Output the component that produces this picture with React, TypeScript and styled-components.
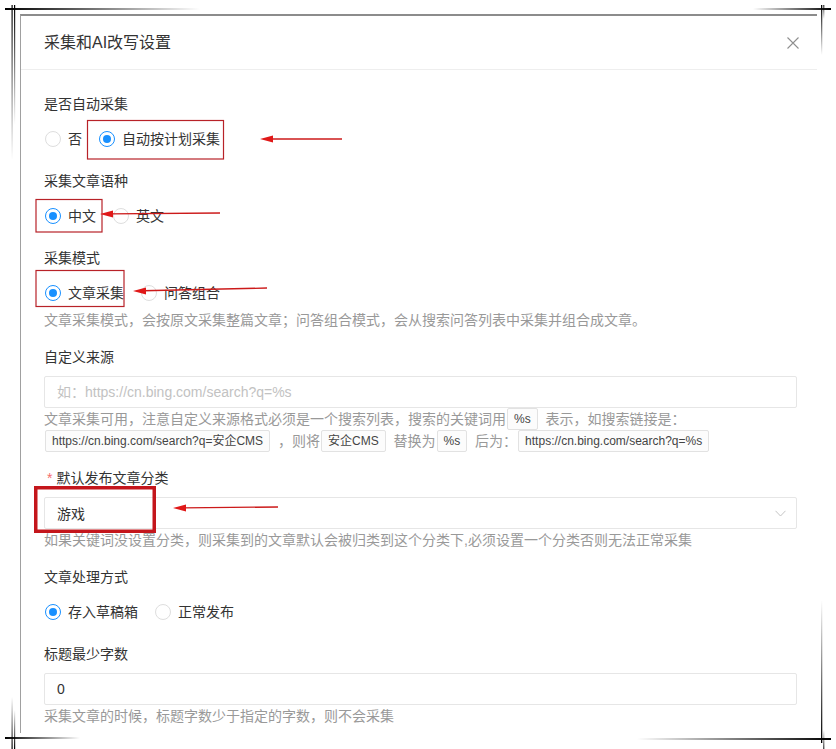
import React from 'react';
import styled, { createGlobalStyle } from 'styled-components';

const GlobalStyle = createGlobalStyle`
  html, body { margin: 0; padding: 0; background: #fff; }
  body { font-family: "Liberation Sans", "Noto Sans CJK SC", sans-serif; color: #333; }
  * { box-sizing: border-box; }
`;

const Page = styled.div`
  position: relative;
  width: 836px;
  height: 749px;
  overflow: hidden;
  background: #fff;
  padding: 14px 0 0 20px;
`;

const Modal = styled.div`
  width: 797px;
  height: 719px;
  border-top: 2px solid #8c8c8c;
  border-left: 1px solid #a0a0a0;
  display: flex;
  flex-direction: column;
  overflow: hidden;
`;

const Header = styled.div`
  height: 54px;
  flex: 0 0 54px;
  display: flex;
  align-items: center;
  justify-content: space-between;
  padding: 0 18px 0 23px;
  border-bottom: 1px solid #eeeeee;
`;

const Title = styled.div`
  font-size: 16px;
  line-height: 22px;
  color: #333;
`;

const Close = styled.button`
  border: 0;
  background: none;
  padding: 0;
  width: 12px;
  height: 12px;
  display: flex;
  cursor: pointer;
`;

const Body = styled.div`
  padding: 23px 20px 0 23px;
  display: flex;
  flex-direction: column;
`;

const FormItem = styled.div`
  display: flex;
  flex-direction: column;
  margin-bottom: 15px;
`;

const Label = styled.div`
  height: 22px;
  line-height: 22px;
  font-size: 14px;
  color: #333;
  margin-bottom: 8px;
  white-space: nowrap;
`;

const Req = styled.span`
  color: #f56c6c;
  margin: 0 4px 0 3px;
`;

const RadioGroup = styled.div`
  display: flex;
  align-items: center;
  height: 32px;
  padding-left: 1px;
`;

const Option = styled.label`
  display: inline-flex;
  align-items: center;
  gap: 7px;
  margin-right: 17px;
  font-size: 14px;
  line-height: 20px;
  color: #333;
  cursor: pointer;
  white-space: nowrap;
`;

const Dot = styled.span<{ $checked?: boolean }>`
  position: relative;
  width: 16px;
  height: 16px;
  border-radius: 50%;
  border: 1px solid ${(p) => (p.$checked ? '#1890ff' : '#dedede')};
  background: #fff;
  flex: 0 0 16px;
  &::after {
    content: '';
    display: ${(p) => (p.$checked ? 'block' : 'none')};
    position: absolute;
    top: 3px;
    left: 3px;
    width: 8px;
    height: 8px;
    border-radius: 50%;
    background: #1890ff;
  }
`;

const Help = styled.div`
  font-size: 14px;
  line-height: 22px;
  color: #999;
  white-space: nowrap;
`;

const Code = styled.code`
  display: inline-block;
  height: 22px;
  line-height: 20px;
  vertical-align: top;
  padding: 0 6px;
  margin: 0 4px 0 1px;
  border: 1px solid #e2e2e2;
  border-radius: 2px;
  background: #fcfcfc;
  font-family: "Liberation Sans", "Noto Sans CJK SC", sans-serif;
  font-size: 12px;
  color: #444;
`;

const Input = styled.input`
  width: 100%;
  height: 32px;
  border: 1px solid #e6e6e6;
  border-radius: 2px;
  padding: 0 12px;
  font-family: inherit;
  font-size: 14px;
  color: #333;
  outline: none;
  background: #fff;
  &::placeholder { color: #c2c2c2; }
`;

const Select = styled.div`
  width: 100%;
  height: 32px;
  border: 1px solid #e6e6e6;
  border-radius: 2px;
  padding: 0 10px 0 12px;
  display: flex;
  align-items: center;
  justify-content: space-between;
  font-size: 14px;
  color: #333;
`;

const Overlay = styled.svg`
  position: absolute;
  left: 0;
  top: 0;
  width: 836px;
  height: 749px;
  pointer-events: none;
`;

type RadioOpt = { text: string; checked?: boolean };

const Radios = ({ options }: { options: RadioOpt[] }) => (
  <RadioGroup>
    {options.map((o) => (
      <Option key={o.text}>
        <Dot $checked={o.checked} />
        {o.text}
      </Option>
    ))}
  </RadioGroup>
);

const Arrow = ({ tx, ty, ex, ey }: { tx: number; ty: number; ex: number; ey: number }) => (
  <g>
    <line x1={tx + 10} y1={ty + (ey - ty) * 0.08} x2={ex} y2={ey} stroke="#cc1a1a" strokeWidth={1.3} />
    <polygon points={`${tx},${ty} ${tx + 13},${ty - 3.5} ${tx + 13},${ty + 3.5}`} fill="#e01818" />
  </g>
);

export default function App() {
  return (
    <>
      <GlobalStyle />
      <Page>
        <Modal>
          <Header>
            <Title>采集和AI改写设置</Title>
            <Close aria-label="关闭">
              <svg width="12" height="12" viewBox="0 0 12 12">
                <path d="M0.5 0.5L11.5 11.5M11.5 0.5L0.5 11.5" stroke="#8f8f8f" strokeWidth="1.1" fill="none" />
              </svg>
            </Close>
          </Header>
          <Body>
            <FormItem>
              <Label>是否自动采集</Label>
              <Radios options={[{ text: '否' }, { text: '自动按计划采集', checked: true }]} />
            </FormItem>
            <FormItem>
              <Label>采集文章语种</Label>
              <Radios options={[{ text: '中文', checked: true }, { text: '英文' }]} />
            </FormItem>
            <FormItem>
              <Label>采集模式</Label>
              <Radios options={[{ text: '文章采集', checked: true }, { text: '问答组合' }]} />
              <Help>文章采集模式，会按原文采集整篇文章；问答组合模式，会从搜索问答列表中采集并组合成文章。</Help>
            </FormItem>
            <FormItem>
              <Label>自定义来源</Label>
              <Input placeholder="如：https://cn.bing.com/search?q=%s" />
              <Help>
                文章采集可用，注意自定义来源格式必须是一个搜索列表，搜索的关键词用<Code>%s</Code> 表示，如搜索链接是：
              </Help>
              <Help>
                <Code>https://cn.bing.com/search?q=安企CMS</Code> ，则将<Code>安企CMS</Code> 替换为<Code>%s</Code> 后为：<Code>https://cn.bing.com/search?q=%s</Code>
              </Help>
            </FormItem>
            <FormItem>
              <Label>
                <Req>*</Req>默认发布文章分类
              </Label>
              <Select>
                <span>游戏</span>
                <svg width="11" height="7" viewBox="0 0 11 7">
                  <path d="M0.5 0.8L5.5 6L10.5 0.8" stroke="#c4c4c4" strokeWidth="1" fill="none" />
                </svg>
              </Select>
              <Help>如果关键词没设置分类，则采集到的文章默认会被归类到这个分类下,必须设置一个分类否则无法正常采集</Help>
            </FormItem>
            <FormItem>
              <Label>文章处理方式</Label>
              <Radios options={[{ text: '存入草稿箱', checked: true }, { text: '正常发布' }]} />
            </FormItem>
            <FormItem>
              <Label>标题最少字数</Label>
              <Input defaultValue="0" />
              <Help>采集文章的时候，标题字数少于指定的字数，则不会采集</Help>
            </FormItem>
          </Body>
        </Modal>

        <Overlay viewBox="0 0 836 749">
          <defs>
            <linearGradient id="fadeRight" x1="0" y1="0" x2="1" y2="0">
              <stop offset="0" stopColor="#000" stopOpacity="1" />
              <stop offset="1" stopColor="#000" stopOpacity="0" />
            </linearGradient>
            <linearGradient id="fadeLeft" x1="0" y1="0" x2="1" y2="0">
              <stop offset="0" stopColor="#000" stopOpacity="0" />
              <stop offset="1" stopColor="#000" stopOpacity="1" />
            </linearGradient>
            <linearGradient id="fadeDown" x1="0" y1="0" x2="0" y2="1">
              <stop offset="0" stopColor="#000" stopOpacity="1" />
              <stop offset="1" stopColor="#000" stopOpacity="0" />
            </linearGradient>
            <linearGradient id="fadeUp" x1="0" y1="0" x2="0" y2="1">
              <stop offset="0" stopColor="#000" stopOpacity="0" />
              <stop offset="1" stopColor="#000" stopOpacity="1" />
            </linearGradient>
          </defs>
          {/* frame corners */}
          <rect x="5" y="8" width="195" height="2" fill="url(#fadeRight)" />
          <rect x="11.5" y="5" width="1.2" height="155" fill="url(#fadeDown)" />
          <rect x="14" y="5" width="1.2" height="120" fill="url(#fadeDown)" />
          <rect x="753" y="8" width="78" height="2" fill="url(#fadeLeft)" />
          <rect x="821" y="5" width="1.3" height="50" fill="url(#fadeDown)" />
          <rect x="823.3" y="5" width="1" height="14" fill="url(#fadeDown)" />
          <rect x="821" y="600" width="1.3" height="143" fill="url(#fadeUp)" />
          <rect x="823.3" y="730" width="1" height="19" fill="url(#fadeUp)" />
          <rect x="637" y="738" width="194" height="2" fill="url(#fadeLeft)" />
          <rect x="5" y="737" width="75" height="2" fill="url(#fadeRight)" />
          <rect x="11.5" y="697" width="1.2" height="52" fill="url(#fadeUp)" />
          <rect x="14" y="710" width="1.2" height="39" fill="url(#fadeUp)" />

          {/* annotations */}
          <rect x="87.5" y="120.5" width="136" height="38.5" fill="none" stroke="#b82228" strokeWidth="1.2" />
          <rect x="36" y="199.5" width="66" height="32.5" fill="none" stroke="#b82228" strokeWidth="1.2" />
          <rect x="36" y="270.5" width="88" height="36" fill="none" stroke="#b82228" strokeWidth="1.2" />
          <rect x="35.75" y="487.75" width="118.5" height="43.5" fill="none" stroke="#c4161c" strokeWidth="3.5" />
          <Arrow tx={260} ty={139} ex={342} ey={139} />
          <Arrow tx={100} ty={214} ex={220} ey={213} />
          <Arrow tx={133} ty={291} ex={267} ey={288} />
          <Arrow tx={173} ty={508} ex={278} ey={507} />
        </Overlay>
      </Page>
    </>
  );
}
